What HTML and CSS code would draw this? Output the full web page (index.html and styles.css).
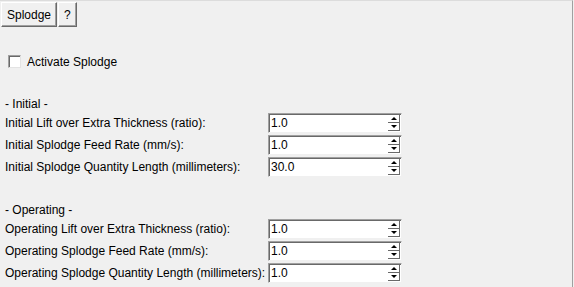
FILE: index.html
```html
<!DOCTYPE html>
<html>
<head>
<meta charset="utf-8">
<link rel="stylesheet" href="styles.css">
</head>
<body>
<div class="frame">
  <div class="tabs">
    <button class="tab">Splodge</button>
    <button class="tab">?</button>
  </div>
  <label class="check"><span class="box"></span>Activate Splodge</label>
  <div class="section">
    <div class="heading">- Initial -</div>
    <div class="grid">
      <div class="lbl">Initial Lift over Extra Thickness (ratio):</div>
      <div class="spin"><span class="val">1.0</span><span class="arrows"><span class="btn up"></span><span class="btn down"></span></span></div>
      <div class="lbl">Initial Splodge Feed Rate (mm/s):</div>
      <div class="spin"><span class="val">1.0</span><span class="arrows"><span class="btn up"></span><span class="btn down"></span></span></div>
      <div class="lbl">Initial Splodge Quantity Length (millimeters):</div>
      <div class="spin"><span class="val">30.0</span><span class="arrows"><span class="btn up"></span><span class="btn down"></span></span></div>
    </div>
  </div>
  <div class="section op">
    <div class="heading">- Operating -</div>
    <div class="grid">
      <div class="lbl">Operating Lift over Extra Thickness (ratio):</div>
      <div class="spin"><span class="val">1.0</span><span class="arrows"><span class="btn up"></span><span class="btn down"></span></span></div>
      <div class="lbl">Operating Splodge Feed Rate (mm/s):</div>
      <div class="spin"><span class="val">1.0</span><span class="arrows"><span class="btn up"></span><span class="btn down"></span></span></div>
      <div class="lbl">Operating Splodge Quantity Length (millimeters):</div>
      <div class="spin"><span class="val">1.0</span><span class="arrows"><span class="btn up"></span><span class="btn down"></span></span></div>
    </div>
  </div>
</div>
</body>
</html>
```
FILE: styles.css
```css
html, body {
  margin: 0;
  padding: 0;
  background: #f0f0f0;
}
body {
  font-family: "Liberation Sans", Arial, sans-serif;
  font-size: 12px;
  color: #000;
}
.frame {
  width: 573px;
  height: 287px;
  border-top: 1px solid #dcdcdc;
  border-right: 1px solid #a0a0a0;
  box-sizing: border-box;
}
.tabs {
  display: flex;
  align-items: flex-end;
  padding: 1px 0 0 1px;
  height: 26px;
  box-sizing: border-box;
}
.tab {
  font: inherit;
  font-size: 12px;
  height: 25px;
  padding: 0 5px;
  margin: 0 1px 0 0;
  background: #f0f0f0;
  border: 1px solid;
  border-color: #ffffff #696969 #696969 #ffffff;
  box-shadow: inset -1px -1px 0 #a0a0a0;
  color: #000;
}
.check {
  display: flex;
  align-items: center;
  margin: 28px 0 0 8px;
  height: 13px;
  font-size: 12px;
}
.box {
  width: 11px;
  height: 11px;
  background: #fff;
  border: 1px solid;
  border-color: #a0a0a0 #e3e3e3 #e3e3e3 #a0a0a0;
  box-shadow: inset 1px 1px 0 #696969;
  margin-right: 6px;
}
.section {
  margin-top: 29px;
  padding-left: 5px;
}
.section.op {
  margin-top: 26px;
}
.heading {
  height: 14px;
  line-height: 14px;
  margin-bottom: 2px;
}
.grid {
  display: grid;
  grid-template-columns: 263px 134px;
  row-gap: 2px;
}
.lbl {
  display: flex;
  align-items: center;
  white-space: nowrap;
}
.spin {
  display: flex;
  height: 20px;
  box-sizing: border-box;
  background: #fff;
  border: 1px solid;
  border-color: #a0a0a0 #f0f0f0 #f0f0f0 #a0a0a0;
  box-shadow: inset 1px 1px 0 #696969;
}
.val {
  flex: 1;
  padding-left: 2px;
  line-height: 18px;
}
.arrows {
  display: flex;
  flex-direction: column;
  width: 12px;
  margin: 1px 1px 1px 0;
}
.btn {
  flex: 1;
  position: relative;
  background: #fff;
  border-right: 1px solid #696969;
  border-bottom: 1px solid #696969;
}
.btn::after {
  content: "";
  position: absolute;
  left: 3px;
  width: 0;
  height: 0;
  border-left: 3px solid transparent;
  border-right: 3px solid transparent;
}
.up::after {
  top: 2px;
  border-bottom: 3px solid #000;
}
.down::after {
  top: 2px;
  border-top: 3px solid #000;
}
```
